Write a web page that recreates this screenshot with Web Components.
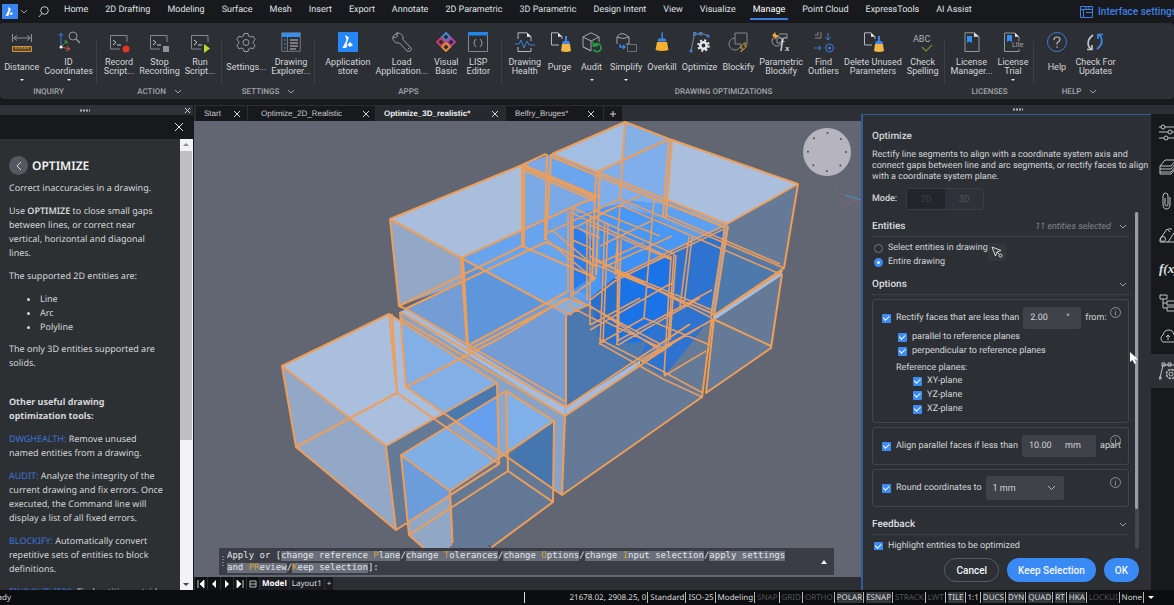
<!DOCTYPE html>
<html lang="en">
<head>
<meta charset="utf-8">
<title>Optimize_3D_realistic</title>
<style>
html,body{margin:0;height:100%}
body{background:#17191d;color:#dcdde0;font-family:Roboto,sans-serif;font-size:9px;overflow:hidden;text-rendering:geometricPrecision}
</style>
</head>
<body>
<cad-app></cad-app>
<script>
const define=(name,css,html,init)=>{
  const t=document.createElement('template');
  t.innerHTML='<style>*{box-sizing:border-box}button{font:inherit;color:inherit;background:none;border:0;padding:0;margin:0}svg{display:block}'+css+'</style>'+html;
  customElements.define(name,class extends HTMLElement{
    constructor(){super();this.attachShadow({mode:'open'}).append(t.content.cloneNode(true));}
    connectedCallback(){if(init&&!this.ready){this.ready=true;init.call(this,this.shadowRoot);}}
  });
};

const terminal='<path d="M18 10V3.500H1.500V17H11" fill="none" stroke="#85888d"/><path d="M4 8l3 2.500-3 2.500M8 13h4" fill="none" stroke="#c9ccd0"/>';
const page='<path d="M9 13H1.500V.8H8l4 4V7" fill="none" stroke="#b6b8bc"/><path d="M8 .8v4h4z" fill="#e4e5e8"/>';
const broom='<path d="M15 4h2v5h2l1 3h-8l1-3h2z" fill="#3d86e8"/><path d="M12 12h8l1 7q-5 2-10 0z" fill="#f4b747"/>';
const icons={
 distance:'<path d="M.5 2v8M19.500 2v8M2 6h16M5 3.500L1.500 6 5 8.500M15 3.500L18.500 6 15 8.500" fill="none" stroke="#8d9095"/><path d="M.5 14.500h19v5H.5z" fill="#5f4a2c" stroke="#d29238"/><path d="M4 15v2M7 15v2M10 15v2M13 15v2M16 15v2" stroke="#e5a64c"/>',
 coords:'<path d="M2 15V2M0 4l2-3 2 3" fill="none" stroke="#3b7be0"/><path d="M2 15l6-6M5 9h3v3" fill="none" stroke="#3aa04c"/><path d="M2 15l9 2M8 14l3 3-4 2" fill="none" stroke="#d2504d"/><circle cx="2" cy="15" r="1.500" fill="#fff"/><circle cx="14" cy="4" r="4" fill="none" stroke="#92959a"/><path d="M17 7l4 4" stroke="#92959a" stroke-width="1.500"/>',
 record:terminal+'<circle cx="17" cy="17" r="3.500" fill="#e0352b"/>',
 stop:terminal+'<path d="M14 14h6v6h-6z" fill="#8e9196"/>',
 run:terminal+'<path d="M14 12l6 4.500-6 4.500z" fill="#b5dc2c"/>',
 gear:'<path d="M8 1.500h4l.6 2.500 2 1 2.500-.8 2 3.400-1.800 1.900v2l1.800 1.900-2 3.400-2.500-.8-2 1-.6 2.500H8L7.400 17l-2-1-2.500.8-2-3.400 1.800-1.900v-2L.9 7.600l2-3.400L5.400 5l2-1z" fill="none" stroke="#9b9ea3" stroke-linejoin="round"/><circle cx="10" cy="10.500" r="3" fill="none" stroke="#9b9ea3"/>',
 explorer:'<path d="M.8.8h18.500v18.500H.8z" fill="none" stroke="#74777c"/><path d="M1 1h18v4H1z" fill="#348ff5"/><path d="M6.500 5v14" stroke="#74777c"/><path d="M3 8h2M3 12h2M3 16h2" stroke="#4b94f0"/><path d="M9 8h8M9 11h8M9 14h8M9 17h6" stroke="#c5c7cb"/>',
 store:'<path d="M0 0h20v20H0z" fill="#2586f8"/><path d="M7 3l4 2.500-2.500 6.500L12 15l3-2-3-3-1.500 1.500L8 16H4.500L8.500 8z" fill="#fff"/>',
 wrench:'<path d="M6 1.500A5.500 5.500 0 0 0 .8 5L4 5.500 5.500 4 4.500 1A5.500 5.500 0 0 1 11 7.500l8 8.500q1 2-1 3t-3 0L7.500 11A5.500 5.500 0 0 1 .8 5" fill="none" stroke="#9b9ea3" stroke-linejoin="round"/><circle cx="16.500" cy="16.500" r=".7" fill="#9b9ea3"/>',
 vb:'<g fill="none" stroke-width="1.800"><path d="M10 1l4 4-4 4-4-4z" stroke="#4a86d8"/><path d="M5 6l4 4-4 4-4-4z" stroke="#d23a66"/><path d="M15 6l4 4-4 4-4-4z" stroke="#b4449d"/><path d="M10 11l4 4-4 4-4-4z" stroke="#e8903a"/></g>',
 lisp:'<path d="M.5 1h19v18.500H.5z" fill="none" stroke="#85888d"/><path d="M0 0h20v3.500H0z" fill="#2385ea"/><path d="M8 7q-4 4 0 8M12 7q4 4 0 8" fill="none" stroke="#9b9ea3"/>',
 health:'<path d="M3 7V.8h9l4 4V9M3 15v4.500h13V16" fill="none" stroke="#b6b8bc"/><path d="M12 .8v4h4z" fill="#fff"/><path d="M0 12h4l2-4 3 8 3-7 2 4h6" fill="none" stroke="#3d80db"/>',
 purge:page+broom,
 audit:'<path d="M9 .8l8 4v5M9 .8l-8 4v10l8 4V9l8-4M1 5l8 4M1 15l8 4" fill="none" stroke="#a3a6aa"/><path d="M12 13a4 4 0 1 1-.5 4.500M11 9.500l.5 4.500 4.500-.5" fill="none" stroke="#23a141" stroke-width="1.600"/>',
 simplify:'<path d="M1 12V5q4-7 12 0v7H10M1 5q6 3 12 0" fill="none" stroke="#a3a6aa"/><path d="M4 12v3h5M7 13l2 2-2 2" fill="none" stroke="#3d80db" stroke-width="1.500"/><path d="M11.500 12.500h9v7h-9z" fill="none" stroke="#6e7176"/>',
 overkill:'<path d="M9.500.5h1.500v6h2.500l1 3h-9l1-3h3z" fill="#3d86e8"/><path d="M5 10h10l1.500 8q-6.500 2-13 0z" fill="#f4b12f"/>',
 optimize:'<path d="M1 19L4.500 2H14l4 2" fill="none" stroke="#85888d"/><path d="M0 18h2v2H0zM3.500.5h2.500V3H3.500zM9.500.5H12V3H9.500zM17 3h2v2h-2z" fill="none" stroke="#4388e8"/><circle cx="13.500" cy="13.500" r="5.300" fill="none" stroke="#e6e7e9" stroke-width="2" stroke-dasharray="2.100 2.060"/><circle cx="13.500" cy="13.500" r="3.200" fill="none" stroke="#e6e7e9" stroke-width="2.600"/>',
 blockify:'<path d="M7 6V1h12v12M7 6a6 6 0 1 0 6 6H7V6" fill="none" stroke="#85888d"/><path d="M16 11l-4 5h3l-2 4 6-6h-3l2-3z" fill="none" stroke="#c09235"/>',
 parametric:'<path d="M6 6h5v5H6zM8 2h8v5" fill="none" stroke="#96999e"/><circle cx="6" cy="9" r="5" fill="none" stroke="#96999e"/><path d="M4 0L1 4l3 1-1 3 5-5H5z" fill="#f3b12f"/><text x="9" y="16" font-family="Liberation Serif" font-style="italic" font-size="15" fill="#e2e3e5">f</text><text x="14" y="19" font-family="Liberation Serif" font-style="italic" font-weight="bold" font-size="9" fill="#e2e3e5">x</text>',
 outliers:'<path d="M1 6h6V0M1 3h3V0" fill="none" stroke="#85888d"/><path d="M14 1v7M11.500 5.500L14 8l2.500-2.500M0 16h7M4.500 13.500L7 16l-2.500 2.500" fill="none" stroke="#3d80db"/><circle cx="15.500" cy="16" r="4" fill="none" stroke="#3d80db"/><circle cx="15.500" cy="16" r="1.500" fill="#3d80db"/>',
 spelling:'<text x="0" y="10" font-family="Roboto" font-size="9" fill="#b0b2b6">ABC</text><path d="M9 15l4 4 6-6" fill="none" stroke="#6c8038" stroke-width="1.400"/>',
 license:'<path d="M3 .8h10l4 4v14.700H3z" fill="none" stroke="#94979c"/><path d="M12 .8v4h5z" fill="#e4e5e8"/><path d="M5 4h5v7l-2.500-1.500L5 11z" fill="#348ff5"/>',
 trial:'<path d="M16 9V5l-4-4H1.500v18.500H16V17" fill="none" stroke="#94979c"/><path d="M12 .8v4h4z" fill="#e4e5e8"/><path d="M4 3h5v7L6.500 8.500 4 10z" fill="#348ff5"/><text x="9" y="15" font-family="Roboto" font-size="7" fill="#a6a8ac">Lite</text>',
 help:'<circle cx="10" cy="10" r="9.500" fill="none" stroke="#3d7bd6"/><path d="M7 8q0-3 3-3t3 2.500q0 1.500-3 3.500v1.500" fill="none" stroke="#b6b8bc" stroke-width="1.200"/><circle cx="10" cy="15" r=".8" fill="#b6b8bc"/>',
 updates:'<path d="M8 3Q1 8 4 15l2 2M2 17.500h5V13" fill="none" stroke="#c3c5c8" stroke-width="1.700"/><path d="M12 17q7-5 4-12l-2-2M18 2.500h-5V7" fill="none" stroke="#3b8cf2" stroke-width="1.700"/>'
};
const svg=(w,h,body)=>`<svg width="${w}" height="${h}" viewBox="0 0 ${w} ${h}" aria-hidden="true">${body}</svg>`;
const closeX=svg(8,8,'<path d="M1 1l6 6M7 1L1 7" stroke="#d4d5d8"/>');
const chev=svg(8,6,'<path d="M1 1l3 3 3-3" fill="none" stroke="#9da0a5"/>');
const grip=svg(10,3,'<path d="M0 1.500h10" stroke="#b4b6b9" stroke-width="2" stroke-dasharray="2 1"/>');

define('ribbon-tool',`
:host{display:block}
button{display:flex;flex-direction:column;align-items:center;min-width:27px;height:60px;line-height:9px;text-align:center;white-space:pre;color:#d5d6d9}
svg{overflow:visible}
.l{display:flex;align-items:center;height:22px;margin-top:4px}
i{border:2px solid transparent;border-top-color:#eee;margin-top:1px}`,
'<button><span class="icon"></span><span class="l"></span></button>',
function(r){
  r.querySelector('.icon').innerHTML=svg(20,20,icons[this.getAttribute('icon')]);
  r.querySelector('.l').textContent=this.getAttribute('label').replace('|','\n');
  if(this.hasAttribute('menu'))r.querySelector('button').append(document.createElement('i'));
});

define('ribbon-group',`
:host{display:flex;flex-direction:column;align-items:center;flex:none;width:var(--w);height:76px;padding-top:9px;position:relative}
.tools{display:flex;gap:5px}
.name{display:flex;align-items:center;gap:8px;height:8px;font-size:8px;line-height:8px;font-weight:500;color:#a3a6ab;margin-top:-4px}
:host::after{content:"";position:absolute;right:0;top:18px;height:42px;border-right:1px solid #3d4044}
:host([last])::after{display:none}`,
'<div class="tools"><slot></slot></div><div class="name"></div>',
function(r){const n=r.querySelector('.name');n.textContent=this.getAttribute('name');if(this.hasAttribute('more'))n.insertAdjacentHTML('beforeend',chev);});

define('main-menu',`
:host{display:flex;height:23px;align-items:center;white-space:nowrap;overflow:hidden;font-size:9px}
.logo{width:16px;height:15px;margin-left:2px;flex:none}
.chev{margin:0 10px 0 2px;flex:none}
nav{display:flex;gap:17px;margin-left:15px;height:21px}
a{color:#dfe0e3;text-decoration:none;height:19px;line-height:19px}
a.on{border-bottom:2px solid #3c7de0;color:#fff;padding:0 3px;margin:0 -3px}
.settings{display:flex;gap:5px;align-items:center;color:#3f80e2;font-weight:500;font-size:10px;margin-left:auto;width:94px;flex:none}
.settings svg{flex:none}`,
`<div class="logo">${svg(16,15,'<path d="M0 0h16v15H0z" fill="#3a83f2"/><path d="M6 3l3 2-2 4.500L9.500 11 11 9.500 9 8l-1 1.500L6 12H3.500L6.500 6z" fill="#fff"/>')}</div>
<div class="chev">${chev}</div>${svg(11,12,'<circle cx="6.500" cy="4.500" r="3.800" fill="none" stroke="#c5c7ca"/><path d="M4 7.500L.8 11" stroke="#c5c7ca"/>')}
<nav></nav><button class="settings">${svg(13,12,'<path d="M.5.5h12v11H.5zM.5 3.500h12M3.500 3.500v8M6 1v2M9 1v2M6 6.500h6" fill="none" stroke="#3f80e2"/>')}Interface settings</button>`,
function(r){r.querySelector('nav').innerHTML='Home,2D Drafting,Modeling,Surface,Mesh,Insert,Export,Annotate,2D Parametric,3D Parametric,Design Intent,View,Visualize,Manage,Point Cloud,ExpressTools,AI Assist'.split(',').map(t=>`<a href="#"${t=='Manage'?' class="on"':''}>${t}</a>`).join('');});

define('tool-ribbon',`
:host{display:flex;height:76px;background:#2c2f34;border-radius:4px;overflow:hidden}`,
`<ribbon-group style="--w:97px" name="INQUIRY"><ribbon-tool icon="distance" label="Distance" menu></ribbon-tool><ribbon-tool icon="coords" label="ID|Coordinates" menu></ribbon-tool></ribbon-group>
<ribbon-group style="--w:125px" name="ACTION" more><ribbon-tool icon="record" label="Record|Script..."></ribbon-tool><ribbon-tool icon="stop" label="Stop|Recording"></ribbon-tool><ribbon-tool icon="run" label="Run|Script..."></ribbon-tool></ribbon-group>
<ribbon-group style="--w:93px" name="SETTINGS" more><ribbon-tool icon="gear" label="Settings..."></ribbon-tool><ribbon-tool icon="explorer" label="Drawing|Explorer..."></ribbon-tool></ribbon-group>
<ribbon-group style="--w:187px" name="APPS"><ribbon-tool icon="store" label="Application|store"></ribbon-tool><ribbon-tool icon="wrench" label="Load|Application..."></ribbon-tool><ribbon-tool icon="vb" label="Visual|Basic"></ribbon-tool><ribbon-tool icon="lisp" label="LISP|Editor"></ribbon-tool></ribbon-group>
<ribbon-group style="--w:443px" name="DRAWING OPTIMIZATIONS"><ribbon-tool icon="health" label="Drawing|Health"></ribbon-tool><ribbon-tool icon="purge" label="Purge"></ribbon-tool><ribbon-tool icon="audit" label="Audit" menu></ribbon-tool><ribbon-tool icon="simplify" label="Simplify" menu></ribbon-tool><ribbon-tool icon="overkill" label="Overkill"></ribbon-tool><ribbon-tool icon="optimize" label="Optimize"></ribbon-tool><ribbon-tool icon="blockify" label="Blockify"></ribbon-tool><ribbon-tool icon="parametric" label="Parametric|Blockify"></ribbon-tool><ribbon-tool icon="outliers" label="Find|Outliers"></ribbon-tool><ribbon-tool icon="purge" label="Delete Unused|Parameters"></ribbon-tool><ribbon-tool icon="spelling" label="Check|Spelling"></ribbon-tool></ribbon-group>
<ribbon-group style="--w:89px" name="LICENSES"><ribbon-tool icon="license" label="License|Manager..."></ribbon-tool><ribbon-tool icon="trial" label="License|Trial" menu></ribbon-tool></ribbon-group>
<ribbon-group style="--w:91px" name="HELP" more last><ribbon-tool icon="help" label="Help"></ribbon-tool><ribbon-tool icon="updates" label="Check For|Updates"></ribbon-tool></ribbon-group>`);

define('help-panel',`
:host{display:flex;flex-direction:column;width:193px;flex:none;background:#2c3033;min-height:0;font-family:"Noto Sans",sans-serif}
.grip{height:10px;display:flex;align-items:center;justify-content:flex-end;background:#2f3337;padding-right:2px;gap:94px}
.bar{height:24px;background:#18191b;display:flex;align-items:center;justify-content:flex-end;padding-right:9px}
.body{flex:1;display:flex;min-height:0}
.text{flex:1;overflow:hidden;padding:17px 16px 0 9px;font-size:9px;line-height:14px;color:#d6d7d9}
h1{display:flex;gap:4px;align-items:center;margin:0 0 6px;font-size:12px;line-height:19px;color:#f2f2f3;font-weight:600}
h1 button{width:19px;height:19px;border-radius:50%;background:#55585e;display:grid;place-items:center}
p{margin:0 0 9px}ul{margin:0 0 8px;padding-left:31px}b{font-weight:600}
h2{font-size:9px;line-height:14px;font-weight:700;margin:25px 0 9px}
a{color:#3d74d8;text-decoration:none}
.scroll{width:13px;background:#f3f3f5;display:flex;flex-direction:column;align-items:center;padding-right:1px}
.scroll i{width:12px;height:289px;background:#bfbfc1;margin:4px 0 auto}
svg{flex:none}`,
`<div class="grip">${grip}${svg(7,7,'<path d="M1 1l5 5M6 1L1 6" stroke="#cfd0d2"/>')}</div>
<div class="bar"><button aria-label="Close">${svg(10,10,'<path d="M1 1l8 8M9 1L1 9" stroke="#e2e3e5"/>')}</button></div>
<div class="body"><div class="text">
<h1><button aria-label="Back">${svg(8,10,'<path d="M6 1L2 5l4 4" fill="none" stroke="#d8d9db"/>')}</button>OPTIMIZE</h1>
<p>Correct inaccuracies in a drawing.</p>
<p>Use <b>OPTIMIZE</b> to close small gaps<br>between lines, or correct near<br>vertical, horizontal and diagonal<br>lines.</p>
<p>The supported 2D entities are:</p>
<ul><li>Line</li><li>Arc</li><li>Polyline</li></ul>
<p>The only 3D entities supported are<br>solids.</p>
<h2>Other useful drawing<br>optimization tools:</h2>
<p><a href="#">DWGHEALTH:</a> Remove unused<br>named entities from a drawing.</p>
<p><a href="#">AUDIT:</a> Analyze the integrity of the<br>current drawing and fix errors. Once<br>executed, the Command line will<br>display a list of all fixed errors.</p>
<p><a href="#">BLOCKIFY:</a> Automatically convert<br>repetitive sets of entities to block<br>definitions.</p>
<p><a href="#">FINDOUTLIERS:</a> Find entities outside</p>
</div><div class="scroll">${svg(8,8,'<path d="M1 7l3-3 3 3z" fill="#8a8a8c"/>')}<i></i>${svg(8,8,'<path d="M1 1l3 3 3-3z" fill="#444"/>')}</div></div>`);

define('doc-tabs',`
:host{display:flex;align-items:flex-end;height:16px;background:#2b2e32;font:8px/15px "Liberation Sans",sans-serif;color:#c9cacd;padding-left:2px}
.tab{display:flex;align-items:center;justify-content:space-between;width:127px;height:15px;padding:0 5px 0 13px;background:#17191c;margin-right:1px}
.tab.start{width:51px;padding:0 6px 0 8px}
.tab.on{width:129px;background:#26292d;color:#f2f2f3;font-weight:bold;padding:0 6px 0 8px}
.tab.last{width:97px;padding:0 8px 0 9px}
.add{width:18px;background:#17191c;height:15px;display:grid;place-items:center}`,
`<div class="tab start"><span>Start</span>${closeX}</div><div class="tab"><span>Optimize_2D_Realistic</span>${closeX}</div><div class="tab on"><span>Optimize_3D_realistic*</span>${closeX}</div><div class="tab last"><span>Belfry_Bruges*</span>${closeX}</div><button class="add" aria-label="New tab">${svg(8,8,'<path d="M4 1v6M1 4h6" stroke="#d4d5d8"/>')}</button>`);

const P=(c,p)=>`<path d="M${p}z" fill="${c}"/>`;
const faces=[
 P('#83aee6','390 219L522 165L552 154L625 122L669 139L798 184L727 224L716 312L566 407L405 309L463 283L461 258'),
 P('#5f9fee','523 166L551 156L597 172L727 224L712 318L640 345L588 305L545 303L522 246'),
 P('#8aa3c4','400 312L565 407V416L562 495L406 387'),
 P('#647a97','565 416L712 318L702 397L562 495'),
 P('#647a97','713 319L782 275L771 348L706 393'),
 P('#647a97','728 224L798 185L783 268L713 316'),
 P('#4d79ac','724 245L780 270L714 315'),
 P('#749cd5','405 309L463 283L545 303L566 316V407'),
 P('#4b79af','567 315L588 304L712 318L640 362L566 407'),
 P('#a2bee3','552 154L625 122L669 139L597 172'),
 P('#85b0e6','624 123L669 139L624 160'),
 P('#aabfdd','672 139L798 184L727 224L666 200'),
 P('#7faeea','597 172L669 141L665 202L728 224L712 312L598 270'),
 P('#6aa5ee','552 156L597 173L594 280L546 240'),
 P('#7ba9e6','523 166L552 156L552 215L522 245'),
 P('#a9bedd','390 219L522 165L597 196L461 258'),
 P('#7aa9e6','524 167L597 197L524 230'),
 P('#92a8c6','390 219L461 258L463 283L399 306'),
 P('#68a4ee','461 258L572 208L597 230L600 290L567 297L545 303'),
 P('#5d96db','461 258L545 303L467 346'),
 P('#88b0df','545 303L567 297L588 305L567 314'),
 P('#4a98f5','572 215L618 204L660 218L712 240L690 260L622 273L600 298L573 290'),
 P('#5ba0f2','620 199L662 204L725 226L694 240L660 220'),
 P('#2b7ee9','573 224L592 240L593 276L573 290'),
 P('#3e91f6','600 224L672 252L620 276L600 290'),
 P('#2d73cf','671 252L726 226L712 315L690 345L664 376L640 362'),
 P('#1b73e8','620 275L670 252L667 310L642 342L603 344L618 320'),
 P('#2870ce','590 298L618 275L615 345L600 343'),
 P('#5291e4','640 362L667 338L667 346L645 362'),
 P('#a6bbdb','566 407L640 360V365L565 416'),
 P('#a9bcdc','713 316L783 270L781 276L713 321'),
 P('#a6bcdc','400 312L406 309L566 407L565 416'),
 // left box
 P('#aabfdd','282 366L389 314L497 383L386 446'),
 P('#93a7c7','282 366L386 446L396 530L296 447'),
 P('#647a97','386 446L497 383L499 464L396 530'),
 P('#82afe6','402 323L497 383L444 413L406 387'),
 P('#4a79b0','444 413L497 383L498 395L457 420'),
 // small front box
 P('#80afe6','401 455L447 427L498 461L450 491'),
 P('#8fa8c9','447 427L506 391L554 421L498 461'),
 P('#659fed','457 421L497 397L498 452'),
 P('#80b0e8','507 392L554 421L507 455'),
 P('#6d9cdb','401 455L450 491V496L408 522'),
 P('#91a7c6','408 522L450 494L453 550H426L409 535'),
 P('#627894','450 491L554 421L553 502L488 550H453'),
 P('#4576ae','509 456L554 421L553 488')
].join('');
// edges of the solids on the outside of the model
const outer=[
 'M390 219L522 165L546 154M390 219L461 258L597 196L523 165M390 219L399 306L522 246L596 278M461 258L467 346M463 258L468 346M461 258L545 303M405 309L546 242L596 266M522 165V246M524 166V246M399 306L406 309',
 'M547 154L545 240M551 154L546 240M552 154L625 122L669 139L798 184L784 268L713 316M552 154L597 172L669 139M597 172L727 224L798 184M552 157L598 176L724 227M625 122L620 199M669 139L663 217M672 140L666 218M596 173L592 280M600 173L596 275',
 'M524 167L596 198M524 170L595 201M467 346L567 292M468 350L567 299',
 'M725 226L711 316M728 226L714 316',
 'M566 315V407M400 312L566 407M400 318L565 416M406 309L566 402M400 312L406 387L562 495L702 397L712 318M565 416L562 495M782 271L713 316M782 274L771 348L706 393L714 318M713 319L771 346M406 387L500 338L567 298M566 407L690 324M565 416L672 344',
 'M282 366L389 314L497 383L386 446ZM282 366L296 447L396 530L386 446M389 314L397 393L296 447M392 314L397 393L499 464L497 383M499 464L396 530',
 'M401 455L506 391L554 421L450 491ZM401 455L409 535L426 550M450 491L453 550M506 391L508 471L409 535M508 471L553 502L554 421M553 502L488 550M450 495L500 463'
].join('');
// edges seen through the translucent faces in the middle
const inner=[
 'M545 303L572 315M547 240L594 279M552 230L593 265M567 315L590 304',
 'M620 199L784 268M620 205L780 274M620 199L547 233M620 205L570 230M666 215L780 264',
 'M727 224L615 278M724 229L622 277M573 208V296M571 210V297M568 212V292M570 297L596 278',
 'M573 208L674 254M574 214L671 258M605 222L600 345M608 224L603 343M618 241L617 345M621 240L618 342M620 205L615 275M654 199L644 318M653 220L600 246',
 'M674 254L668 346M671 256L664 375M676 255L670 340M692 237L684 305M689 237L680 306M590 225L672 260',
 'M573 240L594 250M573 226L600 238M602 262L644 243M602 268L672 236M594 210L660 236M600 214L640 196M587 222V300M590 216V300',
 'M590 256L712 318M594 264L712 313M593 260L712 310M615 271L715 315M590 300L615 281L665 256M570 296L660 344M590 325L640 298M590 325V300M590 330L675 281M644 318L710 345M644 318L600 343M618 345L700 298M640 360L712 320',
 'M599 343L663 379L702 397M599 339L662 371L703 393M567 299L590 306L663 352M567 305L600 322M664 376L706 351M641 362L700 327M617 341L712 290M606 322L666 350'
].join('');
define('drawing-view',`
:host{display:block;flex:1;min-height:0;background:#626673;overflow:hidden}
svg{width:100%;height:100%}`,
`<svg viewBox="194 121 667 456" preserveAspectRatio="xMidYMid slice" role="img" aria-label="3D model">
<path d="M835 190l26 15M842 205l19-6" stroke="#8d6576" opacity=".7"/><path d="M845 195l16 5" stroke="#4b92c6"/>
${faces}<g fill="none" stroke-linejoin="round"><path d="${inner}" stroke="#e89c60" stroke-width="1.600"/><path d="${outer}" stroke="#ef9e59" stroke-width="2"/></g>
<path d="M451 546v4M453 543v7M489 545l2 3" stroke="#2d3f78"/>
<circle cx="827" cy="152" r="24" fill="#b6b5bf"/><circle cx="827" cy="152" r="19" fill="none" stroke="#4c4d57" stroke-width="2" stroke-linecap="round" stroke-dasharray="0 14.920"/></svg>`);

define('command-line',`
:host{display:flex;align-items:center;background:#3a3d45;height:27px;font:9px/12px "DejaVu Sans Mono",monospace;color:#e3e4e8;padding:1px 7px 0 3px;gap:3px;overflow:hidden}
p{margin:0;flex:1}
.o{background:#696e7b}
b{font-weight:400;color:#cfa43a}svg{flex:none}`,
`${svg(2,12,'<path d="M1 0v12" stroke="#c3c5c9" stroke-dasharray="1 2"/>')}<p>Apply or [<span class="o">change reference <b>P</b>lane</span>/<span class="o">change <b>T</b>olerances</span>/<span class="o">change <b>O</b>ptions</span>/<span class="o">change <b>I</b>nput selection</span>/<span class="o">apply settings <br>and <b>PR</b>eview</span>/<span class="o"><b>K</b>eep selection</span>]:</p>${svg(6,4,'<path d="M0 4l3-4 3 4z" fill="#f1f1f3"/>')}`);

define('layout-bar',`
:host{display:flex;align-items:center;gap:1px;height:13px;background:#2b2e32;font:8px/13px "Noto Sans",sans-serif;padding-left:1px}
button{width:12px;height:13px;background:#101113;display:grid;place-items:center}
span,b{background:#1b1c1f;padding:0 2px}b{color:#fff}`,
`<button aria-label="First">${svg(8,8,'<path d="M1 0v8M7 0L3 4l4 4z" fill="#fff" stroke="#fff" stroke-width=".8"/>')}</button><button aria-label="Previous">${svg(8,8,'<path d="M6 0L2 4l4 4z" fill="#fff"/>')}</button><button aria-label="Next">${svg(8,8,'<path d="M2 0l4 4-4 4z" fill="#fff"/>')}</button><button aria-label="Last">${svg(8,8,'<path d="M7 0v8M1 0l4 4-4 4z" fill="#fff" stroke="#fff" stroke-width=".8"/>')}</button><button aria-label="List">${svg(8,8,'<path d="M1 1h6v6H1zM1 4h6" fill="none" stroke="#bbb"/>')}</button><b>Model</b><span>Layout1</span><span>+</span>`);

define('work-area',`
:host{display:flex;flex-direction:column;flex:1;min-width:0;position:relative;border-left:1px solid #17191d}
command-line{position:absolute;left:25px;right:27px;bottom:15px}`,
`<doc-tabs></doc-tabs><drawing-view></drawing-view><command-line></command-line><layout-bar></layout-bar>`);

define('option-card',`
:host{display:block;position:relative;border:1px solid #42454a;border-radius:3px;margin-bottom:4px;padding:6px 9px}
.info{position:absolute;right:7px;top:7px}`,
`<slot></slot><button class="info" aria-label="Information">${svg(11,11,'<circle cx="5.500" cy="5.500" r="5" fill="none" stroke="#8b8e93"/><path d="M5.500 4.500V8.500M5.500 2.500v1" stroke="#8b8e93"/>')}</button>`);

define('check-option',`
:host{display:flex;flex:none}
label{display:flex;align-items:center;gap:5px;line-height:14px;white-space:nowrap}
input{appearance:none;margin:0;width:9px;height:9px;border-radius:1px;background:#3d8bf5;display:grid;place-items:center;flex:none}
input::after{content:"";width:5px;height:3px;border:solid #fff;border-width:0 0 1px 1px;transform:rotate(-45deg) translate(0,-1px)}
input[type=radio]{border-radius:50%;background:none;border:1px solid #74777c;}
input[type=radio]::after{display:none}
input[type=radio]:checked{background:#e8f1ff;border:3px solid #3d8bf5}`,
'<label><input type="checkbox" checked><span><slot></slot></span></label>',
function(r){if(this.hasAttribute('radio')){const i=r.querySelector('input');i.type='radio';i.checked=this.hasAttribute('checked');}});

define('section-head',`
:host{display:flex;align-items:center;height:20px;border-bottom:1px solid #3c3f44;font-weight:500;font-size:10px;padding-right:2px;gap:8px;color:#dddee1}
span{flex:1}em{font-size:9px;font-weight:400;color:#83868b}`,
`<span><slot></slot></span><em><slot name="note"></slot></em>${chev}`);

define('optimize-panel',`
:host{display:flex;flex-direction:column;width:290px;flex:none;min-height:0;background:#2c3034;color:#d3d4d7}
.grip{height:9px;display:grid;place-items:center;background:#2c2f33;padding-left:23px}
.frame{flex:1;min-height:0;border:solid #34589c;border-width:1px 0 0 2px;padding:15px 12px 0 9px;display:flex;flex-direction:column}
h1{font-size:10px;line-height:14px;font-weight:500;margin:0 0 6px}
.desc{line-height:11px;margin:0 -4px 5px 0;white-space:nowrap}
.mode{display:flex;align-items:center;gap:9px;font-weight:500;height:22px}
.toggle{display:flex;height:22px;border:1px solid #3a3d43;border-radius:3px}
.toggle button{width:38px;color:#4c4f55;background:#2e3138}
.toggle button:first-child{background:#22252a;color:#383b41}
.view{display:flex;flex:1;min-height:0;gap:6px;margin-top:2px}
.list{flex:1;overflow:hidden;padding-top:5px;height:338px}
.bar{width:4px;background:#44474e;border-radius:2px}
.bar i{display:block;width:3px;height:297px;background:#9a9ca6;border-radius:2px}
.rows{padding:4px 0 0 2px;display:grid;grid-template-columns:auto 1fr;align-content:start;height:38px}
.pick{width:18px;height:18px;background:#33363b;border-radius:2px;display:grid;place-items:center;grid-row:1/3;grid-column:2;margin-top:2px}
.options{padding:4px 0}
.row{display:flex;align-items:center;gap:4px;height:24px}
.field{display:flex;align-items:center;height:22px;background:#3f4249;border-radius:2px;padding:0 7px;width:58px;flex:none}
.field.wide{width:74px}
.field input{all:unset;width:36px;font:inherit}
select{appearance:none;font:inherit;color:inherit;background:#3f4249;border:0;border-radius:2px;height:24px;width:78px;padding:0 7px}
.sel{position:relative}.sel svg{position:absolute;right:8px;top:9px}
.sub{padding-left:16px}.sub.two{padding-left:31px}
.rp{padding:4px 0 0 14px;line-height:12px}
.low{padding:4px 0 0 2px}
.foot{display:flex;justify-content:flex-end;gap:8px;padding:9px 0 8px}
.foot button{height:24px;border-radius:12px;background:#3a8af6;color:#f2f6fd;font-weight:500;font-size:10px;padding:0 11px}
.foot button.c{background:none;border:1px solid #595c62}`,
`<div class="grip">${grip}</div><div class="frame">
<h1>Optimize</h1><div class="desc">Rectify line segments to align with a coordinate system axis and<br>connect gaps between line and arc segments, or rectify faces to align<br>with a coordinate system plane.</div>
<div class="mode">Mode:<div class="toggle"><button>2D</button><button>3D</button></div></div>
<div class="view"><div class="list">
<section-head>Entities<span slot="note">11 entities selected</span></section-head>
<div class="rows"><check-option radio>Select entities in drawing</check-option><check-option radio checked>Entire drawing</check-option><button class="pick" aria-label="Pick">${svg(12,12,'<path d="M1 1l9 3.500-4 1.500L4.500 10zM6 6l2 2" fill="none" stroke="#d8d9dc"/><circle cx="9.500" cy="9.500" r="1.500" fill="none" stroke="#d8d9dc"/>')}</button></div>
<section-head>Options</section-head>
<div class="options">
<option-card><div class="row"><check-option>Rectify faces that are less than</check-option><span class="field"><input aria-label="Angle" value="2.00">°</span>from:</div>
<div class="sub"><check-option>parallel to reference planes</check-option><check-option>perpendicular to reference planes</check-option></div>
<div class="rp">Reference planes:</div>
<div class="sub two"><check-option>XY-plane</check-option><check-option>YZ-plane</check-option><check-option>XZ-plane</check-option></div></option-card>
<option-card><div class="row"><check-option>Align parallel faces if less than</check-option><span class="field wide"><input aria-label="Distance" value="10.00">mm</span>apart</div></option-card>
<option-card><div class="row"><check-option>Round coordinates to</check-option><span class="sel"><select aria-label="Round to"><option>1 mm</option></select>${svg(9,6,'<path d="M1 1l3.500 3.500L8 1" fill="none" stroke="#b3b5b9"/>')}</span></div></option-card>
</div>
<section-head>Feedback</section-head>
<div class="low"><check-option>Highlight entities to be optimized</check-option></div>
</div><div class="bar"><i></i></div></div>
<div class="foot"><button class="c">Cancel</button><button>Keep Selection</button><button>OK</button></div>
</div>`);

define('tool-rail',`
:host{display:flex;flex-direction:column;width:23px;flex:none;background:#17191c;overflow:hidden}
.top{height:9px;background:#2c2f33;margin-bottom:2px;flex:none}
nav{display:flex;flex-direction:column}
button{height:34px;width:34px;padding-left:8px;flex:none}
button.on{background:#2c3034}`,
`<div class="top"></div><nav></nav>`,
function(r){
 const s='fill="none" stroke="#c0c2c5"';
 const tools=[['Properties',`<path d="M0 3h2M6 3h12M0 8h9M13 8h5M0 14h5M9 14h9" ${s}/><circle cx="4" cy="3" r="2" ${s}/><circle cx="11" cy="8" r="2" ${s}/><circle cx="7" cy="14" r="2" ${s}/>`],
  ['Layers',`<path d="M1 8l5-6h11l-5 6zM1 8v3h11l5-6M1 11v3h11l5-6M1 14v2h11l5-6" ${s}/>`],
  ['Attachments',`<path d="M6 6v6q0 2 1.500 2T9 12V4q0-3-2.500-3T4 4v8q0 5 3.500 5t3.500-5V5" ${s}/>`],
  ['Materials',`<path d="M1 13l7-10 3 3M1 13v3h16V4l-8 12M9 3h4" ${s}/><circle cx="4" cy="13" r="2.500" ${s}/>`],
  ['Parameters',`<text x="0" y="13" font-family="Liberation Serif" font-style="italic" font-weight="bold" font-size="13" fill="#dfe0e2">f(x)</text>`],
  ['Structure',`<path d="M1 1h7v4H1zM4 5v9h4M4 9h4M8 7h9v4H8zM8 13h9v4H8z" ${s}/>`],
  ['Cloud',`<path d="M4 14a4 4 0 0 1 0-7q1-5 6-5 4 0 5 5 3 1 2 7zM9 12V7M7 9l2-2 2 2" ${s}/>`],
  ['Optimize',`<path d="M1 16L4 3h12" ${s}/><path d="M0 15h2v2H0zM3 1h3v3H3zM9 1h3v3H9z" ${s}/><circle cx="12" cy="12" r="4.500" fill="none" stroke="#c0c2c5" stroke-width="1.500" stroke-dasharray="2.500 1"/><circle cx="12" cy="12" r="2" ${s}/>`]];
 r.querySelector('nav').innerHTML=tools.map(([n,p])=>`<button aria-label="${n}"${n=='Optimize'?' class="on"':''}>${svg(18,18,p)}</button>`).join('');
});

define('status-bar',`
:host{display:flex;align-items:center;justify-content:flex-end;height:15px;padding:0 20px 0 0;background:#0c0d0f;font:8px/11px "Noto Sans",sans-serif;color:#d8d9db;white-space:nowrap;overflow:hidden}
span{border-right:1px solid #b9babd;padding:0 1px 0 2px;height:11px}
.off{color:#54565a}.hi{background:#33363b;background-clip:content-box}
.ready{border:0;margin:0 auto 0 -12px;padding:0}
.pos{padding-left:44px;border-left:1px solid #ddd}
i{border:3px solid transparent;border-top-color:#fff;margin:3px 0 0 4px}`,
'',
function(r){
 const off=['SNAP','GRID','ORTHO','STRACK','LWT','LOCKUI'],plain=['Standard','ISO-25','Modeling','1:1','None'];
 r.innerHTML+='<span class="ready">Ready</span><span class="pos">21678.02, 2908.25, 0</span>'+'Standard,ISO-25,Modeling,SNAP,GRID,ORTHO,POLAR,ESNAP,STRACK,LWT,TILE,1:1,DUCS,DYN,QUAD,RT,HKA,LOCKUI,None'.split(',').map(t=>`<span class="${off.includes(t)?'off':plain.includes(t)?'':'hi'}">${t}</span>`).join('')+'<i></i>';
});

define('cad-app',`
:host{display:flex;flex-direction:column;height:100vh;position:relative;overflow:hidden}
tool-ribbon{margin-bottom:6px}
.main{display:flex;flex:1;min-height:0}
.cursor{position:absolute;left:1130px;top:352px}`,
`<main-menu></main-menu><tool-ribbon></tool-ribbon><div class="main"><help-panel></help-panel><work-area></work-area><optimize-panel></optimize-panel><tool-rail></tool-rail></div><status-bar></status-bar>
<div class="cursor">${svg(8,12,'<path d="M0 0v10l2.500-2 2 4 1.500-1-1.500-3.500H8z" fill="#fff"/>')}</div>`);
</script>
</body>
</html>
